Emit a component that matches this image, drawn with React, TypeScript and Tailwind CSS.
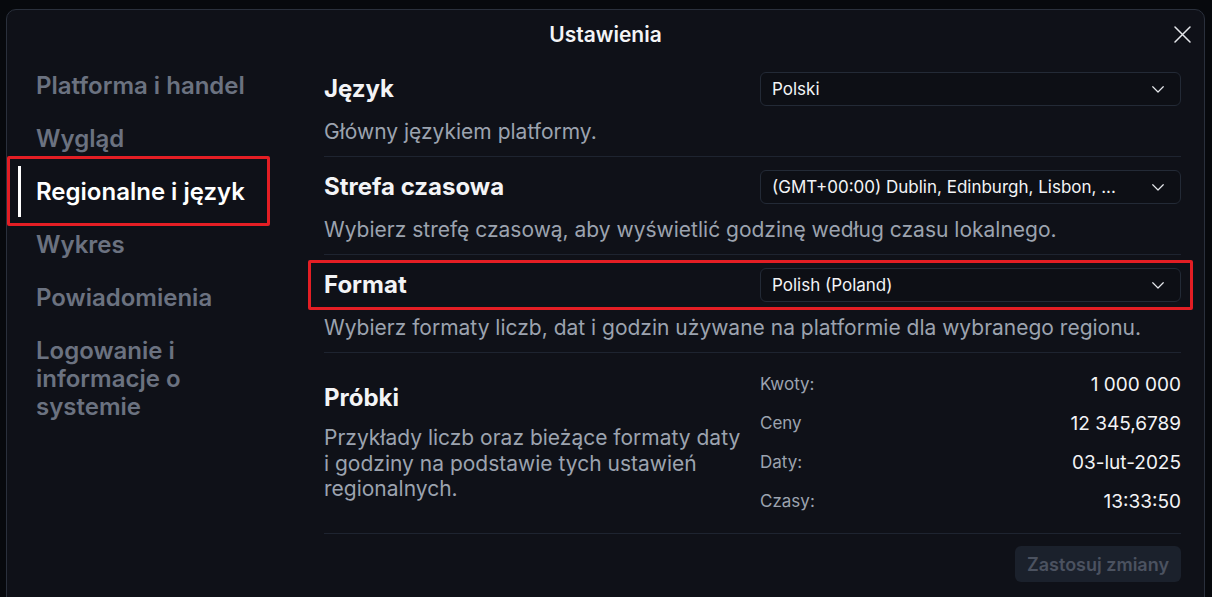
import React from "react";

const Chevron = () => (
  <svg width="18" height="18" viewBox="0 0 24 24" fill="none" stroke="#e5e7eb" strokeWidth="1.6" strokeLinecap="round" strokeLinejoin="round">
    <path d="M5 9l7 7 7-7" />
  </svg>
);

const Select = ({ value }: { value: string }) => (
  <div className="w-[421px] h-[34px] rounded-[6px] border border-[#232a36] bg-[#0d0f15] flex items-center justify-between pl-[11px] pr-[13px]">
    <span className="text-[17px] text-[#f3f4f6] truncate pt-[2px]">{value}</span>
    <Chevron />
  </div>
);

const Row = ({ title, value, desc, highlight }: { title: string; value: string; desc: string; highlight?: boolean }) => (
  <div className="border-b border-[#1e2430] pt-[13px] pb-[11px]">
    <div className="relative flex items-center justify-between">
      <span className="text-[24px] font-bold text-[#f3f4f6] leading-[34px]">{title}</span>
      <Select value={value} />
      {highlight && (
        <div className="absolute left-[-16px] right-[-12px] top-[-8px] bottom-[-8px] border-[3px] border-[#e31e24] rounded-[2px] pointer-events-none" />
      )}
    </div>
    <div className="mt-[12px] text-[21px] leading-[26px] text-[#9ca3af] pt-[1px]">{desc}</div>
  </div>
);

const navItems = ["Platforma i handel", "Wygląd", "Regionalne i język", "Wykres", "Powiadomienia"];

export default function App() {
  return (
    <div className="w-[1212px] h-[597px] overflow-hidden bg-[#07090d] relative" style={{ fontFamily: "Inter, 'Noto Sans', sans-serif" }}>
      <div className="ml-[6px] mt-[9px] w-[1199px] h-[620px] rounded-tl-[10px] rounded-tr-[10px] border border-[#2a303c] bg-[#0f1118] flex flex-col">
        <div className="relative h-[49px] flex items-center justify-center pt-[1px]">
          <span className="text-[21px] font-semibold text-[#f3f4f6]">Ustawienia</span>
          <svg className="absolute right-[13px] top-[16px]" width="17" height="17" viewBox="0 0 17 17" stroke="#e5e7eb" strokeWidth="1.5" strokeLinecap="round">
            <path d="M1 1L16 16M16 1L1 16" />
          </svg>
        </div>
        <div className="flex flex-1">
          <div className="w-[317px] flex flex-col gap-[3px] pt-[1px]">
            {navItems.map((n) => {
              const active = n === "Regionalne i język";
              return (
                <div key={n} className="relative h-[50px] flex items-center pl-[29px] pt-[2px]">
                  {active && <div className="absolute left-[11px] top-[0px] w-[3px] h-[51px] bg-white" />}
                  <span className={`text-[24px] font-semibold ${active ? "text-white font-bold" : "text-[#6b7280]"}`}>{n}</span>
                  {active && (
                    <div className="absolute left-[0px] top-[-10px] w-[263px] h-[70px] border-[3px] border-[#e31e24] rounded-[2px] pointer-events-none" />
                  )}
                </div>
              );
            })}
            <div className="pl-[29px] pt-[12px] pb-[11px] text-[24px] font-semibold leading-[28px] text-[#6b7280]">
              Logowanie i<br />informacje o<br />systemie
            </div>
          </div>
          <div className="flex-1 pr-[23px]">
            <Row title="Język" value="Polski" desc="Główny językiem platformy." />
            <Row title="Strefa czasowa" value="(GMT+00:00) Dublin, Edinburgh, Lisbon, ..." desc="Wybierz strefę czasową, aby wyświetlić godzinę według czasu lokalnego." />
            <Row title="Format" value="Polish (Poland)" desc="Wybierz formaty liczb, dat i godzin używane na platformie dla wybranego regionu." highlight />
            <div className="border-b border-[#1e2430] pt-[12px] pb-[12px] flex items-center justify-between">
              <div className="w-[420px]">
                <div className="text-[24px] font-bold text-[#f3f4f6] leading-[28px]">Próbki</div>
                <div className="mt-[13px] text-[21px] leading-[25.5px] text-[#9ca3af]">
                  Przykłady liczb oraz bieżące formaty daty i godziny na podstawie tych ustawień regionalnych.
                </div>
              </div>
              <div className="w-[421px] flex flex-col">
                {[
                  ["Kwoty:", "1 000 000"],
                  ["Ceny", "12 345,6789"],
                  ["Daty:", "03-lut-2025"],
                  ["Czasy:", "13:33:50"],
                ].map(([k, v]) => (
                  <div key={k} className="h-[39px] flex items-center justify-between pt-[1px]">
                    <span className="text-[17px] text-[#9ca3af]">{k}</span>
                    <span className="text-[19px] text-[#f3f4f6]">{v}</span>
                  </div>
                ))}
              </div>
            </div>
            <div className="pt-[12px] flex justify-end">
              <div className="h-[36px] px-[12px] rounded-[6px] bg-[#1b212c] flex items-center text-[18px] font-semibold text-[#4b5260]">
                Zastosuj zmiany
              </div>
            </div>
          </div>
        </div>
      </div>
    </div>
  );
}
